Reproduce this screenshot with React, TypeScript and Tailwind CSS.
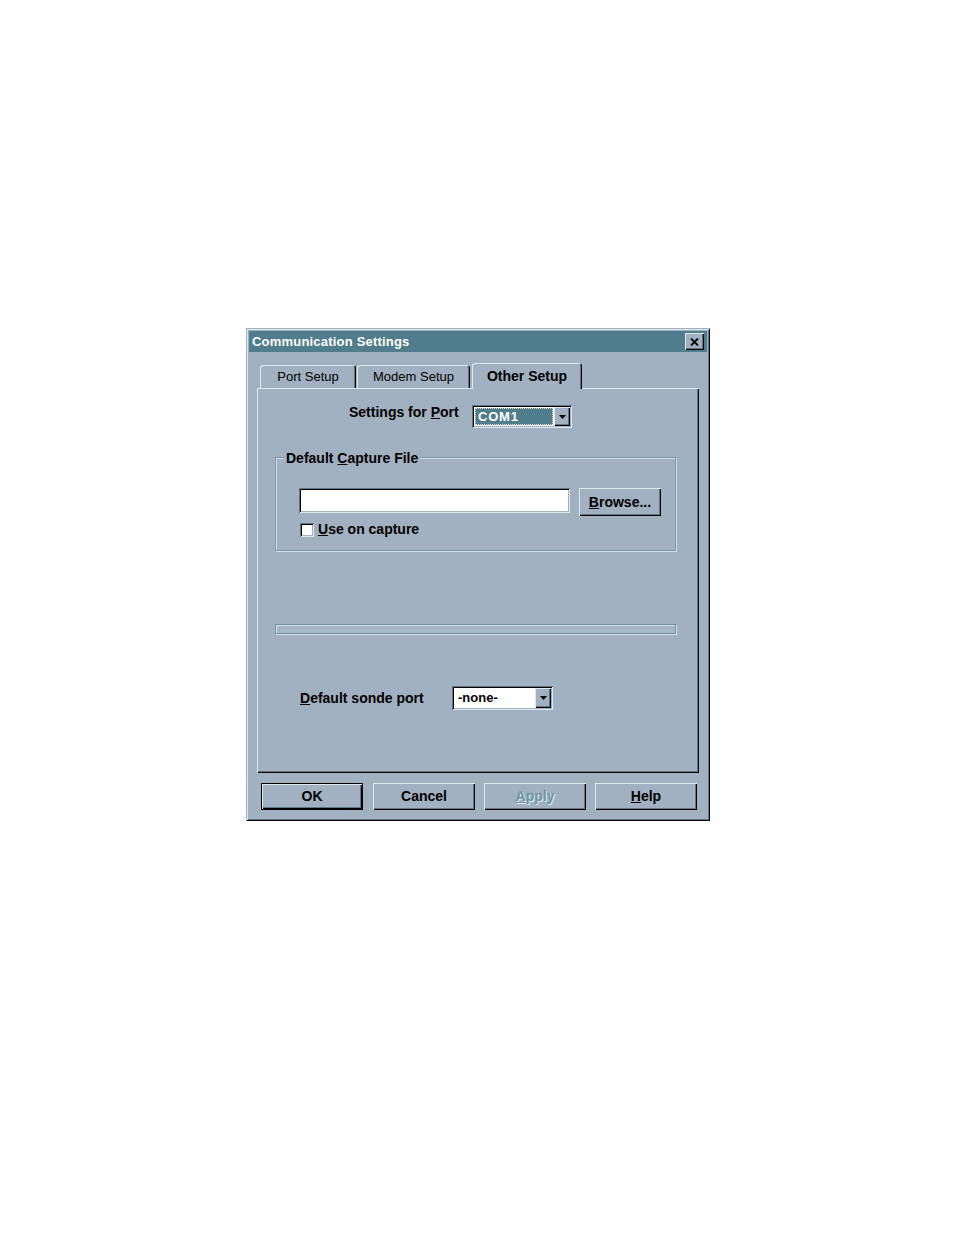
import React from 'react';

const face = 'bg-[#a1b1c1]';
const raised =
    'shadow-[inset_1px_1px_0_#dde9ef,inset_-1px_-1px_0_#000,inset_-2px_-2px_0_#5c7785]';
const sunken =
    'shadow-[inset_1px_1px_0_#5c7785,inset_-1px_-1px_0_#dde9ef,inset_2px_2px_0_#000,inset_-2px_-2px_0_#a1b1c1]';

const DropArrow: React.FC = () => (
    <div className={`w-[16px] h-full ${face} ${raised} flex items-center justify-center`}>
        <svg width="7" height="4" viewBox="0 0 7 4">
            <path d="M0 0h7L3.5 4z" fill="#000" />
        </svg>
    </div>
);

const Combo: React.FC<{ value: string; focused?: boolean; className?: string }> = ({ value, focused, className }) => (
    <div className={`bg-white ${sunken} p-[2px] flex ${className ?? ''}`}>
        <div className="flex-1 p-[1px] flex">
            {focused ? (
                <div className="flex-1 bg-[#4f7d8c] border border-dotted border-[#e8d8c0] flex items-center pl-[2px]">
                    <span className="text-white font-bold text-[13px] tracking-[0.8px]">{value}</span>
                </div>
            ) : (
                <div className="flex-1 flex items-center pl-[3px]">
                    <span className="text-black font-bold text-[13px]">{value}</span>
                </div>
            )}
        </div>
        <DropArrow />
    </div>
);

const Button: React.FC<{ children: React.ReactNode; isDefault?: boolean; disabled?: boolean; className?: string }> = ({
    children,
    isDefault,
    disabled,
    className,
}) => (
    <div className={`${isDefault ? 'border border-black' : ''} ${className ?? ''}`}>
        <div
            className={`w-full h-full ${face} ${raised} flex items-center justify-center text-[14px] font-bold ${
                disabled ? 'text-[#6f95a3] [text-shadow:1px_1px_0_#dde9ef]' : 'text-black'
            }`}
        >
            {children}
        </div>
    </div>
);

const Tab: React.FC<{ label: string; active?: boolean; width: string }> = ({ label, active, width }) => (
    <div
        className={`${width} ${
            active ? 'h-[26px] -mb-[1px] z-10 font-bold text-[14px]' : 'h-[23px] text-[13px]'
        } ${face} rounded-t-[3px] shadow-[inset_1px_1px_0_#dde9ef,inset_-1px_0_0_#000,inset_-2px_0_0_#5c7785] flex items-center justify-center text-black relative`}
    >
        {label}
    </div>
);

export default function App() {
    return (
        <div className="min-h-[1235px] bg-white pt-[328px] pl-[246px] font-['Liberation_Sans',Arial,sans-serif]">
            <div
                className={`w-[464px] h-[493px] ${face} p-[3px] shadow-[inset_1px_1px_0_#a1b1c1,inset_-1px_-1px_0_#000,inset_2px_2px_0_#dde9ef,inset_-2px_-2px_0_#5c7785] flex flex-col`}
            >
                {/* title bar */}
                <div className="h-[21px] bg-[#4f7d8c] flex items-center justify-between pl-[3px] pr-[3px]">
                    <span className="text-white font-bold text-[13px] tracking-[0.2px]">Communication Settings</span>
                    <div className={`w-[19px] h-[17px] ${face} ${raised} flex items-center justify-center`}>
                        <svg width="9" height="8" viewBox="0 0 9 8">
                            <path d="M1 0.5L8 7.5M8 0.5L1 7.5" stroke="#000" strokeWidth="1.8" />
                        </svg>
                    </div>
                </div>

                {/* tabs */}
                <div className="mt-[10px] pl-[11px] flex items-end gap-[1px] h-[26px]">
                    <Tab label="Port Setup" width="w-[96px]" />
                    <Tab label="Modem Setup" width="w-[113px]" />
                    <div className="ml-[1px] flex items-end">
                        <Tab label="Other Setup" width="w-[110px]" active />
                    </div>
                </div>

                {/* tab panel */}
                <div className="ml-[8px] w-[442px] h-[385px] shadow-[inset_1px_1px_0_#dde9ef,inset_-1px_-1px_0_#000,inset_-2px_-2px_0_#5c7785] relative">
                    <div className="flex items-center mt-[17px] h-[23px]">
                        <span className="ml-[92px] w-[123px] text-[14px] font-bold text-black -mt-[8px]">
                            Settings for <u>P</u>ort
                        </span>
                        <Combo value="COM1" focused className="w-[100px] h-[23px]" />
                    </div>

                    {/* group box */}
                    <div className="ml-[18px] mt-[29px] w-[401px] h-[94px] border border-[#7c98a6] shadow-[1px_1px_0_#cfdfe7,inset_1px_1px_0_#cfdfe7] relative">
                        <span className={`absolute -top-[10px] left-[8px] px-[2px] ${face} text-[14px] font-bold text-black`}>
                            Default <u>C</u>apture File
                        </span>
                        <div className="flex items-start mt-[30px] ml-[23px]">
                            <div className={`w-[271px] h-[25px] bg-white ${sunken}`} />
                            <Button className="ml-[9px] w-[82px] h-[28px]">
                                <span>
                                    <u>B</u>rowse...
                                </span>
                            </Button>
                        </div>
                        <div className="flex items-center mt-[3px] ml-[24px]">
                            <div className={`w-[14px] h-[14px] bg-white ${sunken}`} />
                            <span className="ml-[4px] text-[14px] font-bold text-black">
                                <u>U</u>se on capture
                            </span>
                        </div>
                    </div>

                    {/* separator bar */}
                    <div className="ml-[18px] mt-[73px] w-[401px] h-[10px] border border-[#6d909c] shadow-[1px_1px_0_#d3e3ea,inset_1px_1px_0_#d3e3ea] bg-[#a6b8c6]" />

                    <div className="flex items-center mt-[52px] h-[24px]">
                        <span className="ml-[43px] w-[152px] text-[14px] font-bold text-black">
                            <u>D</u>efault sonde port
                        </span>
                        <Combo value="-none-" className="w-[101px] h-[24px]" />
                    </div>
                </div>

                {/* buttons */}
                <div className="flex mt-[10px] ml-[12px] gap-[9px]">
                    <Button isDefault className="w-[102px] h-[27px]">
                        OK
                    </Button>
                    <Button className="ml-[1px] w-[102px] h-[27px]">Cancel</Button>
                    <Button disabled className="w-[102px] h-[27px]">
                        <u>A</u>pply
                    </Button>
                    <Button className="w-[102px] h-[27px]">
                        <u>H</u>elp
                    </Button>
                </div>
            </div>
        </div>
    );
}
